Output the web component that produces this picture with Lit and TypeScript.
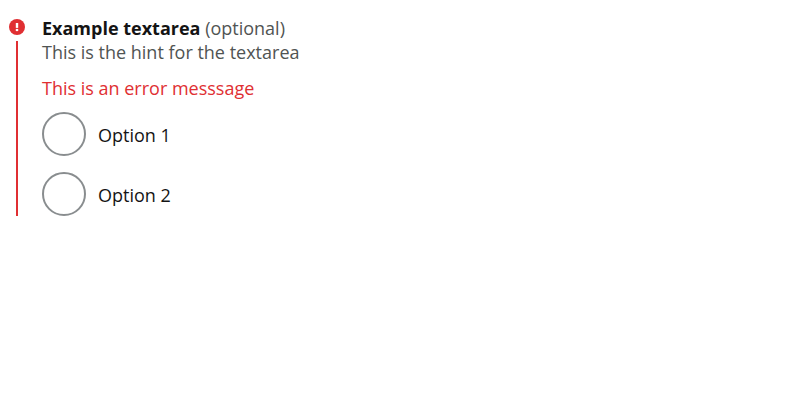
import { LitElement, html, css } from "lit";
import { customElement, state } from "lit/decorators.js";

interface Option {
  value: string;
  label: string;
}

@customElement("app-root")
export class AppRoot extends LitElement {
  static styles = css`
    :host {
      display: block;
      padding: 16px 8px;
      background: #fff;
      color: #141414;
      font-family: "Open Sans", sans-serif;
      font-size: 18px;
      line-height: 24px;
      font-kerning: none;
    }
    .field {
      display: flex;
      gap: 16px;
    }
    .marker {
      display: flex;
      flex-direction: column;
      align-items: center;
      gap: 5px;
      width: 18px;
      padding-top: 2px;
    }
    .icon {
      display: block;
      width: 18px;
      height: 18px;
    }
    .bar {
      flex: 1;
      width: 2px;
      background: #e02f32;
    }
    fieldset {
      flex: 1;
      min-width: 0;
      margin: 0;
      padding: 0;
      border: 0;
    }
    legend {
      padding: 0;
      font-weight: 700;
    }
    .optional {
      color: #505453;
      font-weight: 400;
    }
    .hint,
    .error {
      margin: 0;
    }
    .hint {
      color: #505453;
    }
    .error {
      margin: 12px 0;
      color: #e02f32;
    }
    .options {
      display: grid;
      gap: 16px;
    }
    .option {
      display: flex;
      align-items: center;
      gap: 12px;
    }
    .option label {
      padding-top: 2px;
    }
    .radio {
      appearance: none;
      flex: none;
      width: 44px;
      height: 44px;
      margin: 0;
      border: 2px solid #898d8f;
      border-radius: 50%;
      background: #fff;
    }
    .radio:checked {
      background: radial-gradient(#141414 0 10px, #fff 11px);
    }
  `;

  @state() private selected = "";

  private options: Option[] = [
    { value: "1", label: "Option 1" },
    { value: "2", label: "Option 2" },
  ];

  render() {
    return html`
      <div class="field">
        <div class="marker" aria-hidden="true">
          <svg class="icon" viewBox="0 0 18 18">
            <circle cx="9" cy="9" r="8" fill="#e02f32" />
            <path d="M7.8 5h2.4v4.9H7.8z" fill="#fff" />
            <path d="M7.8 10.9h2.4v2.2H7.8z" fill="#fff" />
          </svg>
          <div class="bar"></div>
        </div>
        <fieldset aria-describedby="hint error">
          <legend>Example textarea <span class="optional">(optional)</span></legend>
          <p class="hint" id="hint">This is the hint for the textarea</p>
          <p class="error" id="error">This is an error messsage</p>
          <div class="options">
            ${this.options.map(
              (o) => html`
                <div class="option">
                  <input
                    class="radio"
                    type="radio"
                    name="example"
                    id="option-${o.value}"
                    .checked=${this.selected === o.value}
                    @change=${() => (this.selected = o.value)}
                  />
                  <label for="option-${o.value}">${o.label}</label>
                </div>
              `
            )}
          </div>
        </fieldset>
      </div>
    `;
  }
}
